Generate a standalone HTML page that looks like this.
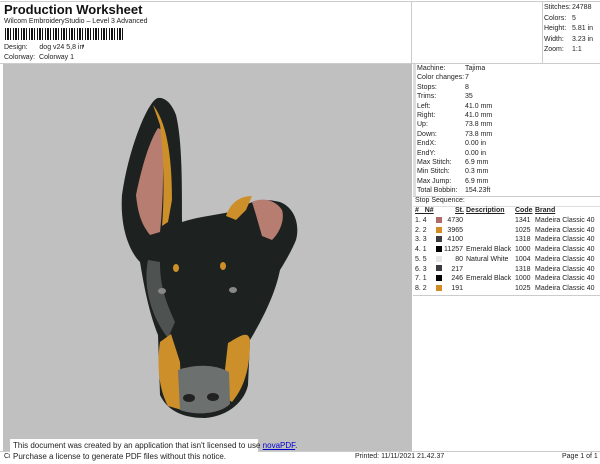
<!DOCTYPE html>
<html><head><style>
body{margin:0;width:600px;height:464px;background:#fff;font-family:"Liberation Sans",sans-serif;color:#222;position:relative;overflow:hidden;font-size:7px}
.a{position:absolute;white-space:nowrap}
</style></head><body>
<div class="a" style="left:0;top:1px;width:600px;height:1px;background:#ccc"></div>
<div class="a" style="left:542px;top:1px;width:1px;height:62px;background:#ccc"></div>
<div class="a" style="left:411px;top:1px;width:1px;height:62px;background:#ccc"></div>
<div class="a" style="left:4px;top:2px;font-size:13px;font-weight:bold;color:#111">Production Worksheet</div>
<div class="a" style="left:4px;top:18px;font-size:7px">Wilcom EmbroideryStudio – Level 3 Advanced</div>
<div class="a" style="left:5px;top:28px;width:118px;height:12px;background:repeating-linear-gradient(90deg,#111 0 1px,#fff 1px 2px,#111 2px 4px,#fff 4px 5px,#111 5px 6px,#fff 6px 8px)"></div>
<div class="a" style="left:82px;top:38px;font-weight:bold;font-size:9px">,</div>
<div class="a" style="left:4px;top:44px">Design:&nbsp;&nbsp;&nbsp;&nbsp;&nbsp; dog v24 5,8 in</div>
<div class="a" style="left:4px;top:54px">Colorway:&nbsp; Colorway 1</div>
<div class="a" style="left:544px;top:3px;line-height:10.5px">Stitches:<br>Colors:<br>Height:<br>Width:<br>Zoom:</div>
<div class="a" style="left:572px;top:3px;line-height:10.5px">24788<br>5<br>5.81 in<br>3.23 in<br>1:1</div>
<div class="a" style="left:0;top:63px;width:600px;height:1px;background:#ccc"></div>
<div class="a" style="left:3px;top:64px;width:409px;height:387px;background:#c0c0c0"></div>
<div class="a" style="left:413px;top:64px;width:3px;height:132px;background:#ddd"></div>
<div class="a" style="left:417px;top:64px;line-height:9.4px">Machine:<br>Color changes:<br>Stops:<br>Trims:<br>Left:<br>Right:<br>Up:<br>Down:<br>EndX:<br>EndY:<br>Max Stitch:<br>Min Stitch:<br>Max Jump:<br>Total Bobbin:</div>
<div class="a" style="left:465px;top:64px;line-height:9.4px">Tajima<br>7<br>8<br>35<br>41.0 mm<br>41.0 mm<br>73.8 mm<br>73.8 mm<br>0.00 in<br>0.00 in<br>6.9 mm<br>0.3 mm<br>6.9 mm<br>154.23ft</div>
<div class="a" style="left:413px;top:196px;width:187px;height:1px;background:#ccc"></div>
<div class="a" style="left:415px;top:197px">Stop Sequence:</div>
<div class="a" style="left:413px;top:206px;width:187px;height:1px;background:#ddd"></div>
<div class="a" style="left:415px;top:207px;font-weight:bold;text-decoration:underline">#&nbsp;&nbsp; N#</div>
<div class="a" style="left:455px;top:207px;font-weight:bold;text-decoration:underline">St.</div>
<div class="a" style="left:466px;top:207px;font-weight:bold;text-decoration:underline">Description</div>
<div class="a" style="left:515px;top:207px;font-weight:bold;text-decoration:underline">Code</div>
<div class="a" style="left:535px;top:207px;font-weight:bold;text-decoration:underline">Brand</div>
<div class="a" style="left:415px;top:216px;line-height:9.7px">1. 4<br>2. 2<br>3. 3<br>4. 1<br>5. 5<br>6. 3<br>7. 1<br>8. 2</div>
<div class="a" style="left:436px;top:216px;line-height:9.7px;text-align:right;width:27px">4730<br>3965<br>4100<br>11257<br>80<br>217<br>246<br>191</div>
<div class="a" style="left:466px;top:216px;line-height:9.7px">&nbsp;<br>&nbsp;<br>&nbsp;<br>Emerald Black<br>Natural White<br>&nbsp;<br>Emerald Black<br>&nbsp;</div>
<div class="a" style="left:515px;top:216px;line-height:9.7px">1341<br>1025<br>1318<br>1000<br>1004<br>1318<br>1000<br>1025</div>
<div class="a" style="left:535px;top:216px;line-height:9.7px">Madeira Classic 40<br>Madeira Classic 40<br>Madeira Classic 40<br>Madeira Classic 40<br>Madeira Classic 40<br>Madeira Classic 40<br>Madeira Classic 40<br>Madeira Classic 40</div>
<div class="a" style="left:436px;top:217px;width:6px;height:6px;background:#b06a6a"></div>
<div class="a" style="left:436px;top:227px;width:6px;height:6px;background:#d38b28"></div>
<div class="a" style="left:436px;top:236px;width:6px;height:6px;background:#3b3b42"></div>
<div class="a" style="left:436px;top:246px;width:6px;height:6px;background:#000"></div>
<div class="a" style="left:436px;top:256px;width:6px;height:6px;background:#e6e6e6"></div>
<div class="a" style="left:436px;top:265px;width:6px;height:6px;background:#3b3b42"></div>
<div class="a" style="left:436px;top:275px;width:6px;height:6px;background:#000"></div>
<div class="a" style="left:436px;top:285px;width:6px;height:6px;background:#d38b28"></div>
<div class="a" style="left:413px;top:295px;width:187px;height:1px;background:#ccc"></div>
<svg class="a" style="left:0;top:0" width="600" height="464">
<path d="M158,98 C148,100 128,150 122,195 C120,225 128,250 140,262 C143,280 148,310 158,335 L160,395 C168,412 185,418 205,418 C230,416 245,400 248,385 L250,340 C262,320 275,295 280,270 C285,262 292,250 296,240 C300,225 295,208 280,202 C265,198 250,200 238,210 C220,215 200,216 182,222 C182,180 182,140 176,115 C172,104 165,97 158,98 Z" fill="#1d211f"/>
<path d="M158,128 C150,140 142,165 136,195 C138,215 142,225 150,235 L160,232 C163,205 164,170 162,130 Z" fill="#b77d70"/>
<path d="M153,105 C165,120 172,150 172,200 L168,222 L162,226 C165,190 163,150 160,125 Z" fill="#cc8f2a"/>
<path d="M226,216 C230,203 240,196 252,196 L246,210 L236,220 Z" fill="#cc8f2a"/>
<path d="M252,202 C262,197 276,200 282,210 C285,220 280,232 272,240 L262,236 L256,215 Z" fill="#b77d70"/>
<path d="M148,260 C143,285 150,315 168,338 L175,322 C165,300 160,285 160,262 Z" fill="#4e5250"/>
<path d="M160,342 C157,362 158,388 168,406 L182,410 L180,362 L171,334 Z" fill="#cc8f2a"/>
<path d="M228,343 C240,336 248,330 250,340 C250,365 246,385 232,402 L222,396 Z" fill="#cc8f2a"/>
<path d="M178,370 C195,364 215,364 229,372 L230,404 C220,414 196,416 180,410 Z" fill="#6c706e"/>
<ellipse cx="189" cy="398" rx="6" ry="4" fill="#222"/><ellipse cx="213" cy="397" rx="6" ry="4" fill="#222"/>
<ellipse cx="176" cy="268" rx="3" ry="4" fill="#cc8f2a"/><ellipse cx="223" cy="266" rx="3" ry="4" fill="#cc8f2a"/>
<ellipse cx="162" cy="291" rx="4" ry="3" fill="#888"/><ellipse cx="233" cy="290" rx="4" ry="3" fill="#888"/>
</svg>
<div class="a" style="left:0;top:451px;width:600px;height:1px;background:#ccc"></div>
<div class="a" style="left:4px;top:453px;font-size:7px">Cr</div>
<div class="a" style="left:355px;top:453px;font-size:7px">Printed: 11/11/2021 21.42.37</div>
<div class="a" style="left:562px;top:453px;font-size:7px">Page 1 of 1</div>
<div class="a" style="left:10px;top:439px;width:248px;height:25px;background:#fff"></div>
<div class="a" style="left:13px;top:440px;font-size:8px;line-height:11px">This document was created by an application that isn't licensed to use <span style="color:#00c;text-decoration:underline">novaPDF</span>.<br>Purchase a license to generate PDF files without this notice.</div>
</body></html>
